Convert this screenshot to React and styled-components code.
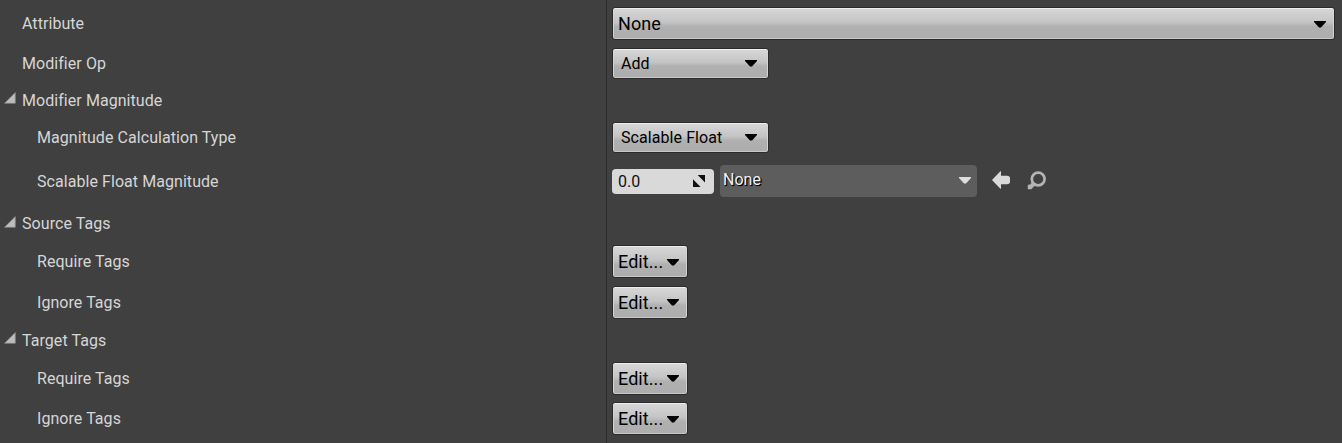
import React from "react";
import styled, { createGlobalStyle } from "styled-components";

const GlobalStyle = createGlobalStyle`
  * { box-sizing: border-box; }
  body { margin: 0; background: #404040; font-family: Roboto, "Liberation Sans", sans-serif; }
`;

const Panel = styled.main`
  width: 1342px;
  height: 443px;
  overflow: hidden;
  background: linear-gradient(90deg, #404040 606px, #2a2a2a 606px, #2a2a2a 607px, #404040 607px);
`;

const Row = styled.div`
  display: grid;
  grid-template-columns: 607px 1fr;
  height: ${(p) => p.$height}px;
`;

const NameCell = styled.div`
  display: flex;
  align-items: center;
  padding-left: ${(p) => (p.$nested ? 37 : p.$group ? 4 : 22)}px;
`;

const Label = styled.span`
  padding-top: 1px;
  color: #d6d6d6;
  font-size: 16px;
  line-height: 20px;
  letter-spacing: 0.06px;
  white-space: nowrap;
`;

const Expander = styled.svg`
  width: 12px;
  height: 12px;
  margin: -4px 6px 0 0;
`;

const ValueCell = styled.div`
  display: flex;
  align-items: center;
  padding: 0 7px 0 5px;
`;

const Button = styled.button`
  display: flex;
  flex: none;
  align-items: center;
  justify-content: space-between;
  width: ${(p) => p.$width}px;
  height: ${(p) => p.$height}px;
  padding: 0 ${(p) => p.$right}px 0 ${(p) => p.$left}px;
  border: 1px solid #2b2b2b;
  border-radius: 3px;
  background: linear-gradient(#d8d8d8, #c4c4c4 46%, #b0b0b0 60%, #adadad);
  box-shadow: inset 0 1px #eeeeee, inset 0 -1px #c8c8c8, inset 1px 0 #d4d4d4, inset -1px 0 #d4d4d4;
  color: #000;
  font: ${(p) => p.$font}px/20px Roboto, "Liberation Sans", sans-serif;
  letter-spacing: 0.07px;
  white-space: nowrap;
`;

const Caret = styled.svg`
  flex: none;
  width: 12px;
  height: 7px;
  margin-top: ${(p) => (p.$low ? 2 : 0)}px;
`;

const NumberField = styled.div`
  display: flex;
  align-items: center;
  justify-content: space-between;
  width: 102px;
  height: 25px;
  padding: 0 8px 0 6px;
  border-radius: 4px;
  background: #d9d9d9;
  color: #111;
  font-size: 16px;
`;

const SpinIcon = styled.svg`
  width: 14px;
  height: 14px;
`;

const TablePicker = styled.div`
  display: flex;
  align-items: center;
  justify-content: space-between;
  width: 257px;
  height: 32px;
  margin-left: 6px;
  padding: 0 6px 1px 3px;
  border-radius: 4px;
  background: #5d5d5d;
`;

const PickerText = styled.span`
  padding-bottom: 3px;
  color: #f2f2f2;
  font-size: 16px;
  text-shadow: 1px 1px 0 #000, 1px 1px 1px #000;
`;

const ToolIcon = styled.svg`
  flex: none;
  width: 20px;
  height: 20px;
  margin-left: ${(p) => p.$gap}px;
`;

const DownCaret = ({ color = "#000", low }) => (
  <Caret viewBox="0 0 12 7" $low={low}><path d="M0 0H12V1L7 6.5H5L0 1Z" fill={color} /></Caret>
);

const Dropdown = ({ text, width = 157, height = 31, left = 8, right = 11, font = 16, low }) => (
  <Button $width={width} $height={height} $left={left} $right={right} $font={font}>
    <span>{text}</span><DownCaret low={low} />
  </Button>
);

const EditButton = ({ low }) => (
  <Dropdown text="Edit..." width={76} height={33} left={5} right={8} font={18} low={low} />
);

const Property = ({ name, height, nested, group, children }) => (
  <Row $height={height}>
    <NameCell $nested={nested} $group={group}>
      {group && (
        <Expander viewBox="0 0 12 12">
          <path d="M11.3 .5V11.3H.5Z" fill="#bcbcbc" stroke="#8c8c8c" strokeWidth=".6" />
        </Expander>
      )}
      <Label>{name}</Label>
    </NameCell>
    <ValueCell>{children}</ValueCell>
  </Row>
);

export default function App() {
  return (
    <Panel>
      <GlobalStyle />
      <Property name="Attribute" height={47}>
        <Dropdown text="None" width={723} height={33} left={5} right={8} font={18} low />
      </Property>
      <Property name="Modifier Op" height={33}><Dropdown text="Add" /></Property>
      <Property name="Modifier Magnitude" height={40} group />
      <Property name="Magnitude Calculation Type" height={35} nested><Dropdown text="Scalable Float" /></Property>
      <Property name="Scalable Float Magnitude" height={52} nested>
        <NumberField>
          <span>0.0</span>
          <SpinIcon viewBox="0 0 14 14"><path d="M5.7 1H13V8.6ZM1 5.3V13H8.6Z" fill="#111" /></SpinIcon>
        </NumberField>
        <TablePicker><PickerText>None</PickerText><DownCaret color="#dedede" /></TablePicker>
        <ToolIcon viewBox="0 0 20 20" $gap={14}>
          <path d="M1 9L9.4 .3H10V4.8H16Q19 4.8 19 7.5V10.5Q19 13.2 16 13.2H10V17.8H9.4Z" fill="#dadada" />
        </ToolIcon>
        <ToolIcon viewBox="0 0 20 20" $gap={16}>
          <circle cx="11.2" cy="8" r="6.4" fill="none" stroke="#b4b4b4" strokeWidth="2.7" />
          <path d="M5 11L8.3 14.3L6 16L4.5 18H1V14.2L3.7 13.4Z" fill="#b4b4b4" stroke="#b4b4b4" strokeWidth=".5" />
        </ToolIcon>
      </Property>
      <Property name="Source Tags" height={33} group />
      <Property name="Require Tags" height={43} nested><EditButton low /></Property>
      <Property name="Ignore Tags" height={39} nested><EditButton /></Property>
      <Property name="Target Tags" height={36} group />
      <Property name="Require Tags" height={41} nested><EditButton /></Property>
      <Property name="Ignore Tags" height={39} nested><EditButton low /></Property>
    </Panel>
  );
}
